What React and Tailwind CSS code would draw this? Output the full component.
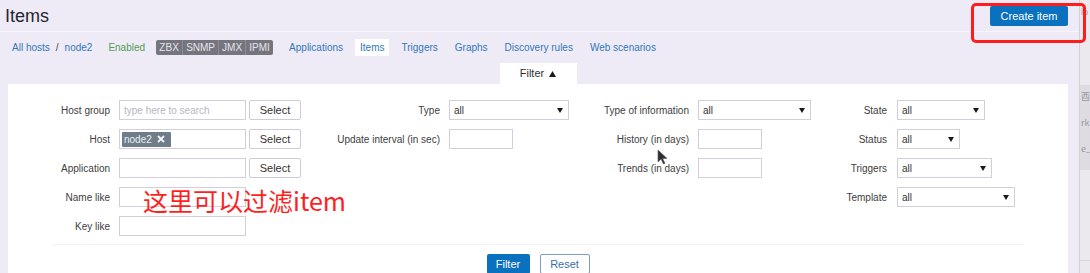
import React from "react";

const Arrow = () => (
  <svg width="6" height="5" viewBox="0 0 6 5" className="shrink-0">
    <path d="M0 0 L6 0 L3 5 Z" fill="#1a1a1a" />
  </svg>
);

const Sel = ({ w }) => (
  <div
    className="h-[20px] border border-[#d3cedb] bg-white flex items-center justify-between pl-[4px] pr-[5px] text-[10px] text-[#333]"
    style={{ width: w }}
  >
    <span>all</span>
    <Arrow />
  </div>
);

const Inp = ({ w, children }) => (
  <div
    className="h-[20px] border border-[#d3cedb] bg-white flex items-center pl-[2px]"
    style={{ width: w }}
  >
    {children}
  </div>
);

const SelBtn = () => (
  <div className="ml-[3px] w-[52px] h-[20px] border border-[#cfcad6] bg-white rounded-[2px] flex items-center justify-center text-[11px] text-[#333]">
    Select
  </div>
);

const Label = ({ children, pr = "pr-[9px]" }) => (
  <div className={`flex items-center justify-end ${pr} text-[10px] text-[#404040] whitespace-nowrap`}>
    {children}
  </div>
);

const Empty = () => <div />;

export default function App() {
  return (
    <div className="relative w-[1090px] h-[273px] overflow-hidden bg-[#efebf6] flex font-['Liberation_Sans',Arial,sans-serif]">
      <main className="w-[1079px] shrink-0">
        {/* header */}
        <div className="h-[32px] border-b border-[#f7f4fb] flex justify-between items-start pl-[5px] pr-[11px]">
          <h1 className="mt-[6px] text-[18px] leading-[21px] text-[#1f2730]">Items</h1>
          <button className="mt-[6px] h-[20px] w-[78px] bg-[#0a71be] text-white text-[11px] rounded-[2px] flex items-center justify-center">
            Create item
          </button>
        </div>

        {/* nav */}
        <div className="mt-[7px] h-[17px] flex items-center pl-[12px] text-[10px] text-[#2f78bd] whitespace-nowrap">
          <span>All hosts</span>
          <span className="ml-[6px] text-[#444]">/</span>
          <span className="ml-[6px]">node2</span>
          <span className="ml-[16px] text-[#4f9d56]">Enabled</span>
          <div className="ml-[11px] h-[15px] flex bg-[#75767d] rounded-[2px] text-[#e4e4e8] overflow-hidden">
            <span className="w-[26px] flex items-center justify-center">ZBX</span>
            <span className="w-[1px] bg-[#8c8d93]" />
            <span className="w-[35px] flex items-center justify-center">SNMP</span>
            <span className="w-[1px] bg-[#8c8d93]" />
            <span className="w-[26px] flex items-center justify-center">JMX</span>
            <span className="w-[1px] bg-[#8c8d93]" />
            <span className="w-[27px] flex items-center justify-center">IPMI</span>
          </div>
          <div className="ml-[11px] flex items-center gap-[7px]">
            <span className="px-[5px]">Applications</span>
            <span className="px-[5px] h-[17px] bg-white flex items-center">Items</span>
            <span className="px-[5px]">Triggers</span>
            <span className="px-[5px]">Graphs</span>
            <span className="px-[5px]">Discovery rules</span>
            <span className="px-[5px]">Web scenarios</span>
          </div>
        </div>

        {/* filter tab */}
        <div className="mt-[7px] flex justify-center w-[1060px] ml-[8px]">
          <div className="w-[77px] h-[21px] bg-white flex items-center justify-center gap-[5px] text-[11px] text-[#333]">
            <span>Filter</span>
            <svg width="7" height="6" viewBox="0 0 7 6">
              <path d="M0 6 L7 6 L3.5 0 Z" fill="#1a1a1a" />
            </svg>
          </div>
        </div>

        {/* filter panel */}
        <div className="ml-[8px] w-[1060px] bg-white pt-[16px] h-[200px]">
          <div className="grid grid-cols-[111px_182px_148px_120px_129px_113px_86px_1fr] auto-rows-[20px] gap-y-[9px]">
            {/* row 1 */}
            <Label>Host group</Label>
            <div className="flex">
              <Inp w="127px">
                <span className="pl-[2px] text-[10px] text-[#b9b4c2]">type here to search</span>
              </Inp>
              <SelBtn />
            </div>
            <Label>Type</Label>
            <Sel w="120px" />
            <Label>Type of information</Label>
            <Sel w="113px" />
            <Label pr="pr-[10px]">State</Label>
            <Sel w="88px" />

            {/* row 2 */}
            <Label>Host</Label>
            <div className="flex">
              <Inp w="127px">
                <span className="h-[15px] w-[49px] bg-[#6f7d8a] text-[#eef0f3] text-[10px] flex items-center pl-[2px] gap-[5px] rounded-[1px]">
                  node2
                  <svg width="8" height="8" viewBox="0 0 8 8">
                    <path d="M1 1 L7 7 M7 1 L1 7" stroke="#f4f5f7" strokeWidth="1.8" />
                  </svg>
                </span>
              </Inp>
              <SelBtn />
            </div>
            <Label>Update interval (in sec)</Label>
            <Inp w="64px" />
            <Label>History (in days)</Label>
            <Inp w="64px" />
            <Label pr="pr-[10px]">Status</Label>
            <Sel w="63px" />

            {/* row 3 */}
            <Label>Application</Label>
            <div className="flex">
              <Inp w="127px" />
              <SelBtn />
            </div>
            <Empty />
            <Empty />
            <Label>Trends (in days)</Label>
            <Inp w="64px" />
            <Label pr="pr-[10px]">Triggers</Label>
            <Sel w="95px" />

            {/* row 4 */}
            <Label>Name like</Label>
            <Inp w="127px" />
            <Empty />
            <Empty />
            <Empty />
            <Empty />
            <Label pr="pr-[10px]">Template</Label>
            <Sel w="118px" />

            {/* row 5 */}
            <Label>Key like</Label>
            <Inp w="127px" />
          </div>

          <div className="mt-[8px] mx-[44px] border-t border-[#f4f0f8]" />

          <div className="mt-[9px] flex justify-center gap-[10px]">
            <button className="w-[43px] h-[20px] bg-[#0a71be] text-white text-[11px] rounded-[2px] flex items-center justify-center">
              Filter
            </button>
            <button className="w-[50px] h-[20px] bg-white border border-[#7f9cc2] text-[#3b6fa8] text-[11px] rounded-[2px] flex items-center justify-center">
              Reset
            </button>
          </div>
        </div>
      </main>

      {/* right strip (window behind) */}
      <div className="w-[11px] shrink-0 border-l border-[#d2d0d6] bg-[#ebe9ee] flex flex-col overflow-hidden text-[#9a98a0] text-[9px] leading-[12px]">
        <div className="h-[45px] pt-[6px] pl-[1px] whitespace-nowrap">lo</div>
        <div className="h-[40px]" />
        <div className="h-[85px] bg-[#dedce2] flex flex-col gap-[14px] pt-[6px] pl-[1px] whitespace-nowrap font-['Noto_Sans_CJK_SC',sans-serif]">
          <span>酉</span>
          <span>rk</span>
          <span>e_</span>
        </div>
        <div className="mt-[90px] border-t border-[#d8d6dc]" />
      </div>

      {/* annotation: red box */}
      <div className="absolute left-[971px] top-[3px] w-[115px] h-[40px] border-[3px] border-[#ff1c1c] rounded-[5px]" />

      {/* annotation: red text */}
      <div className="absolute left-[143px] top-[188px] text-[25px] leading-[25px] text-[#ff1e1e] font-['Noto_Sans_CJK_SC',sans-serif] whitespace-nowrap">
        这里可以过滤item
      </div>

      {/* mouse cursor */}
      <svg className="absolute left-[657px] top-[149px]" width="11" height="16" viewBox="0 0 11 16">
        <path d="M1 1 L1 13 L4 10 L6.5 15 L8 14.3 L5.6 9.4 L10 9.4 Z" fill="#2e2e33" stroke="#55555a" strokeWidth="0.6" />
      </svg>
    </div>
  );
}
